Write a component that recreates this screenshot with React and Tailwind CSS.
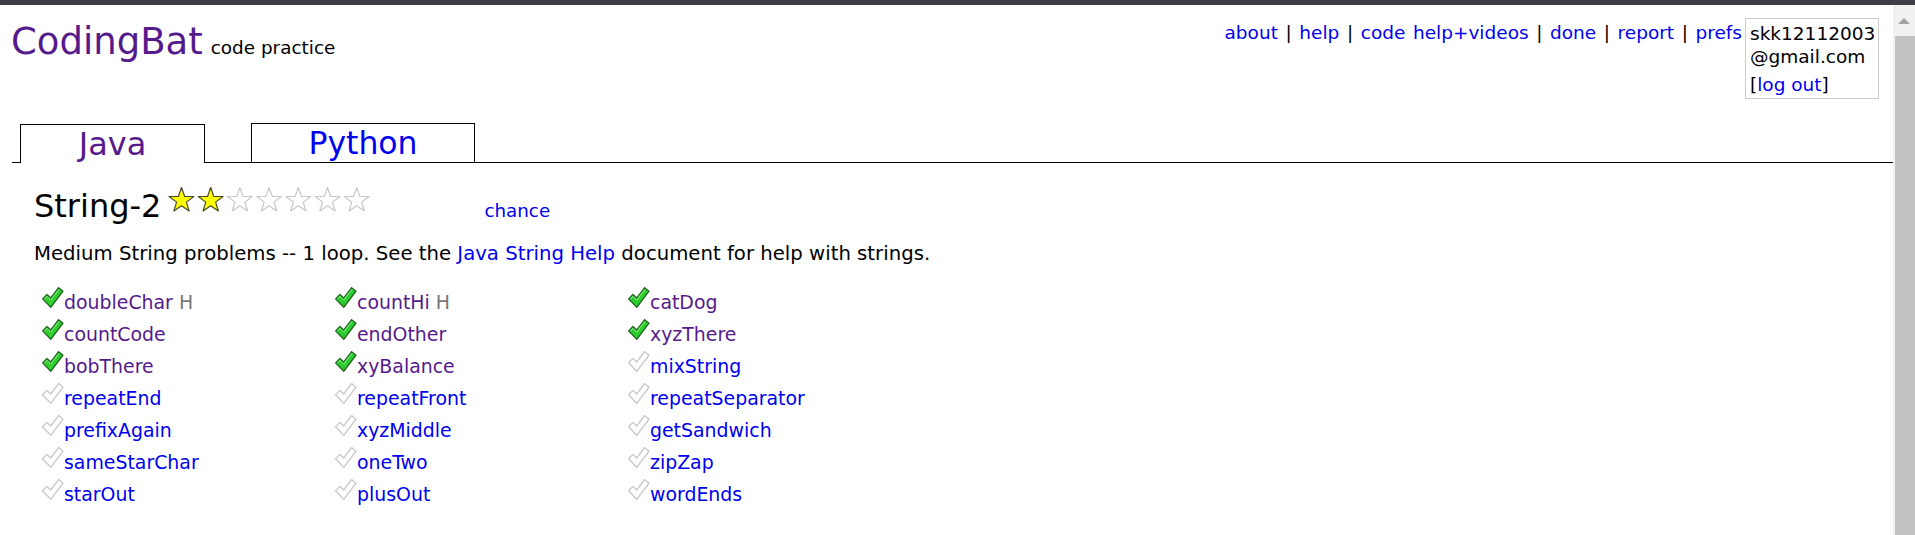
import React from 'react';

const rows = [
  [{ name: 'doubleChar', done: true, hint: true }, { name: 'countHi', done: true, hint: true }, { name: 'catDog', done: true }],
  [{ name: 'countCode', done: true }, { name: 'endOther', done: true }, { name: 'xyzThere', done: true }],
  [{ name: 'bobThere', done: true }, { name: 'xyBalance', done: true }, { name: 'mixString' }],
  [{ name: 'repeatEnd' }, { name: 'repeatFront' }, { name: 'repeatSeparator' }],
  [{ name: 'prefixAgain' }, { name: 'xyzMiddle' }, { name: 'getSandwich' }],
  [{ name: 'sameStarChar' }, { name: 'oneTwo' }, { name: 'zipZap' }],
  [{ name: 'starOut' }, { name: 'plusOut' }, { name: 'wordEnds' }],
];

const colWidths = ['w-[293px]', 'w-[293px]', 'w-[300px]'];

const STAR = '0,-13 3.06,-4.21 12.36,-4.02 4.95,1.61 7.64,10.52 0,5.2 -7.64,10.52 -4.95,1.61 -12.36,-4.02 -3.06,-4.21';

function Stars({ filled = 2, total = 7 }) {
  return (
    <svg width="203" height="30" viewBox="0 0 203 30" className="shrink-0">
      {Array.from({ length: total }).map((_, i) => (
        <polygon
          key={i}
          points={STAR}
          transform={`translate(${13.5 + i * 29.2} 13.5)`}
          fill={i < filled ? '#ffff00' : '#ffffff'}
          stroke={i < filled ? '#4a4a2a' : '#c8c8c8'}
          strokeWidth="1.2"
          strokeLinejoin="round"
        />
      ))}
    </svg>
  );
}

function Check({ done }) {
  const d = 'M0.6 11.8 L5 7.4 L8.6 11 L16.6 0.6 L21 4.2 L8.8 20.4 Z';
  return (
    <svg width="22" height="22" viewBox="0 0 22 22" className="shrink-0 -ml-px">
      {done ? (
        <>
          <path d={d} fill="#2ecc2e" stroke="#1d5c1d" strokeWidth="1.2" strokeLinejoin="round" />
          <path d="M2.6 11.7 L5 9.4 L8.7 13.1 L16.8 2.6" fill="none" stroke="#8cf08c" strokeWidth="1" />
        </>
      ) : (
        <path d={d} fill="#ffffff" stroke="#c6c6c6" strokeWidth="1.3" strokeLinejoin="round" />
      )}
    </svg>
  );
}

function Item({ item }) {
  return (
    <div className="flex items-start h-[32px]">
      <Check done={item.done} />
      <span className={`leading-[32px] -mt-[1px] ${item.done ? 'text-[#551a8b]' : 'text-[#0000ee]'}`}>
        {item.name}
      </span>
      {item.hint && <span className="leading-[32px] -mt-[1px] ml-[6px] text-[#777777]">H</span>}
    </div>
  );
}

export default function App() {
  return (
    <div className="h-[535px] w-full overflow-hidden flex flex-col bg-white" style={{ fontFamily: '"DejaVu Sans", Verdana, sans-serif' }}>
      <div className="h-[5px] bg-[#3c3d45] shrink-0" />
      <div className="flex flex-1 min-h-0">
        <div className="flex-1 min-w-0">
          {/* header */}
          <div className="h-[118px] flex justify-between items-start">
            <div className="flex items-baseline pl-[11px] pt-[16px]">
              <span className="text-[37px] leading-[42px] text-[#551a8b]">CodingBat</span>
              <span className="text-[18.4px] ml-[8px] text-black">code practice</span>
            </div>
            <div className="flex items-start mr-[14px] pt-[13px]">
              <div className="text-[18.5px] leading-[22px] mt-[4px] text-black [word-spacing:1.7px]">
                <span className="text-[#0000ee]">about</span> | <span className="text-[#0000ee]">help</span> |{' '}
                <span className="text-[#0000ee]">code help+videos</span> | <span className="text-[#0000ee]">done</span> |{' '}
                <span className="text-[#0000ee]">report</span> | <span className="text-[#0000ee]">prefs</span>
              </div>
              <div className="ml-[3px] w-[134px] h-[81px] border border-[#cccccc] pl-[4px] pt-[3px] text-[18.5px] leading-[23px] text-black">
                <div>skk12112003</div>
                <div>@gmail.com</div>
                <div className="mt-[5px]">
                  [<span className="text-[#0000ee]">log out</span>]
                </div>
              </div>
            </div>
          </div>

          {/* tabs */}
          <div className="ml-[12px] flex items-end border-b border-black">
            <div className="ml-[8px] w-[185px] h-[39px] -mb-px bg-white border border-b-0 border-black text-center text-[32px] leading-[34px] pt-[2px] text-[#551a8b]">
              Java
            </div>
            <div className="ml-[46px] w-[224px] h-[39px] border border-b-0 border-black text-center text-[31.5px] leading-[34px] pt-[2px] text-[#0000ee]">
              Python
            </div>
          </div>

          {/* content */}
          <div className="pl-[34px]">
            <div className="flex items-baseline mt-[24px]">
              <span className="text-[32px] leading-[36px] text-black">String-2</span>
              <span className="ml-[7px]">
                <Stars />
              </span>
              <span className="ml-[113px] text-[18.3px] text-[#0000ee]">chance</span>
            </div>
            <div className="mt-[19px] text-[19.7px] leading-[22px] text-black">
              Medium String problems -- 1 loop. See the <span className="text-[#0000ee]">Java String Help</span> document for
              help with strings.
            </div>
            <div className="mt-[22px] ml-[9px] text-[18.9px] flex flex-col">
              {rows.map((row, r) => (
                <div key={r} className="flex">
                  {row.map((item, c) => (
                    <div key={c} className={colWidths[c]}>
                      <Item item={item} />
                    </div>
                  ))}
                </div>
              ))}
            </div>
          </div>
        </div>

        {/* scrollbar */}
        <div className="w-[22px] shrink-0 bg-[#f1f1f1] flex flex-col">
          <div className="h-[31px] flex items-center justify-center">
            <div className="w-0 h-0 border-l-[6px] border-r-[6px] border-b-[6px] border-l-transparent border-r-transparent border-b-[#a3a3a3]" />
          </div>
          <div className="flex-1 ml-[2px] bg-[#c1c1c1]" />
        </div>
      </div>
    </div>
  );
}
